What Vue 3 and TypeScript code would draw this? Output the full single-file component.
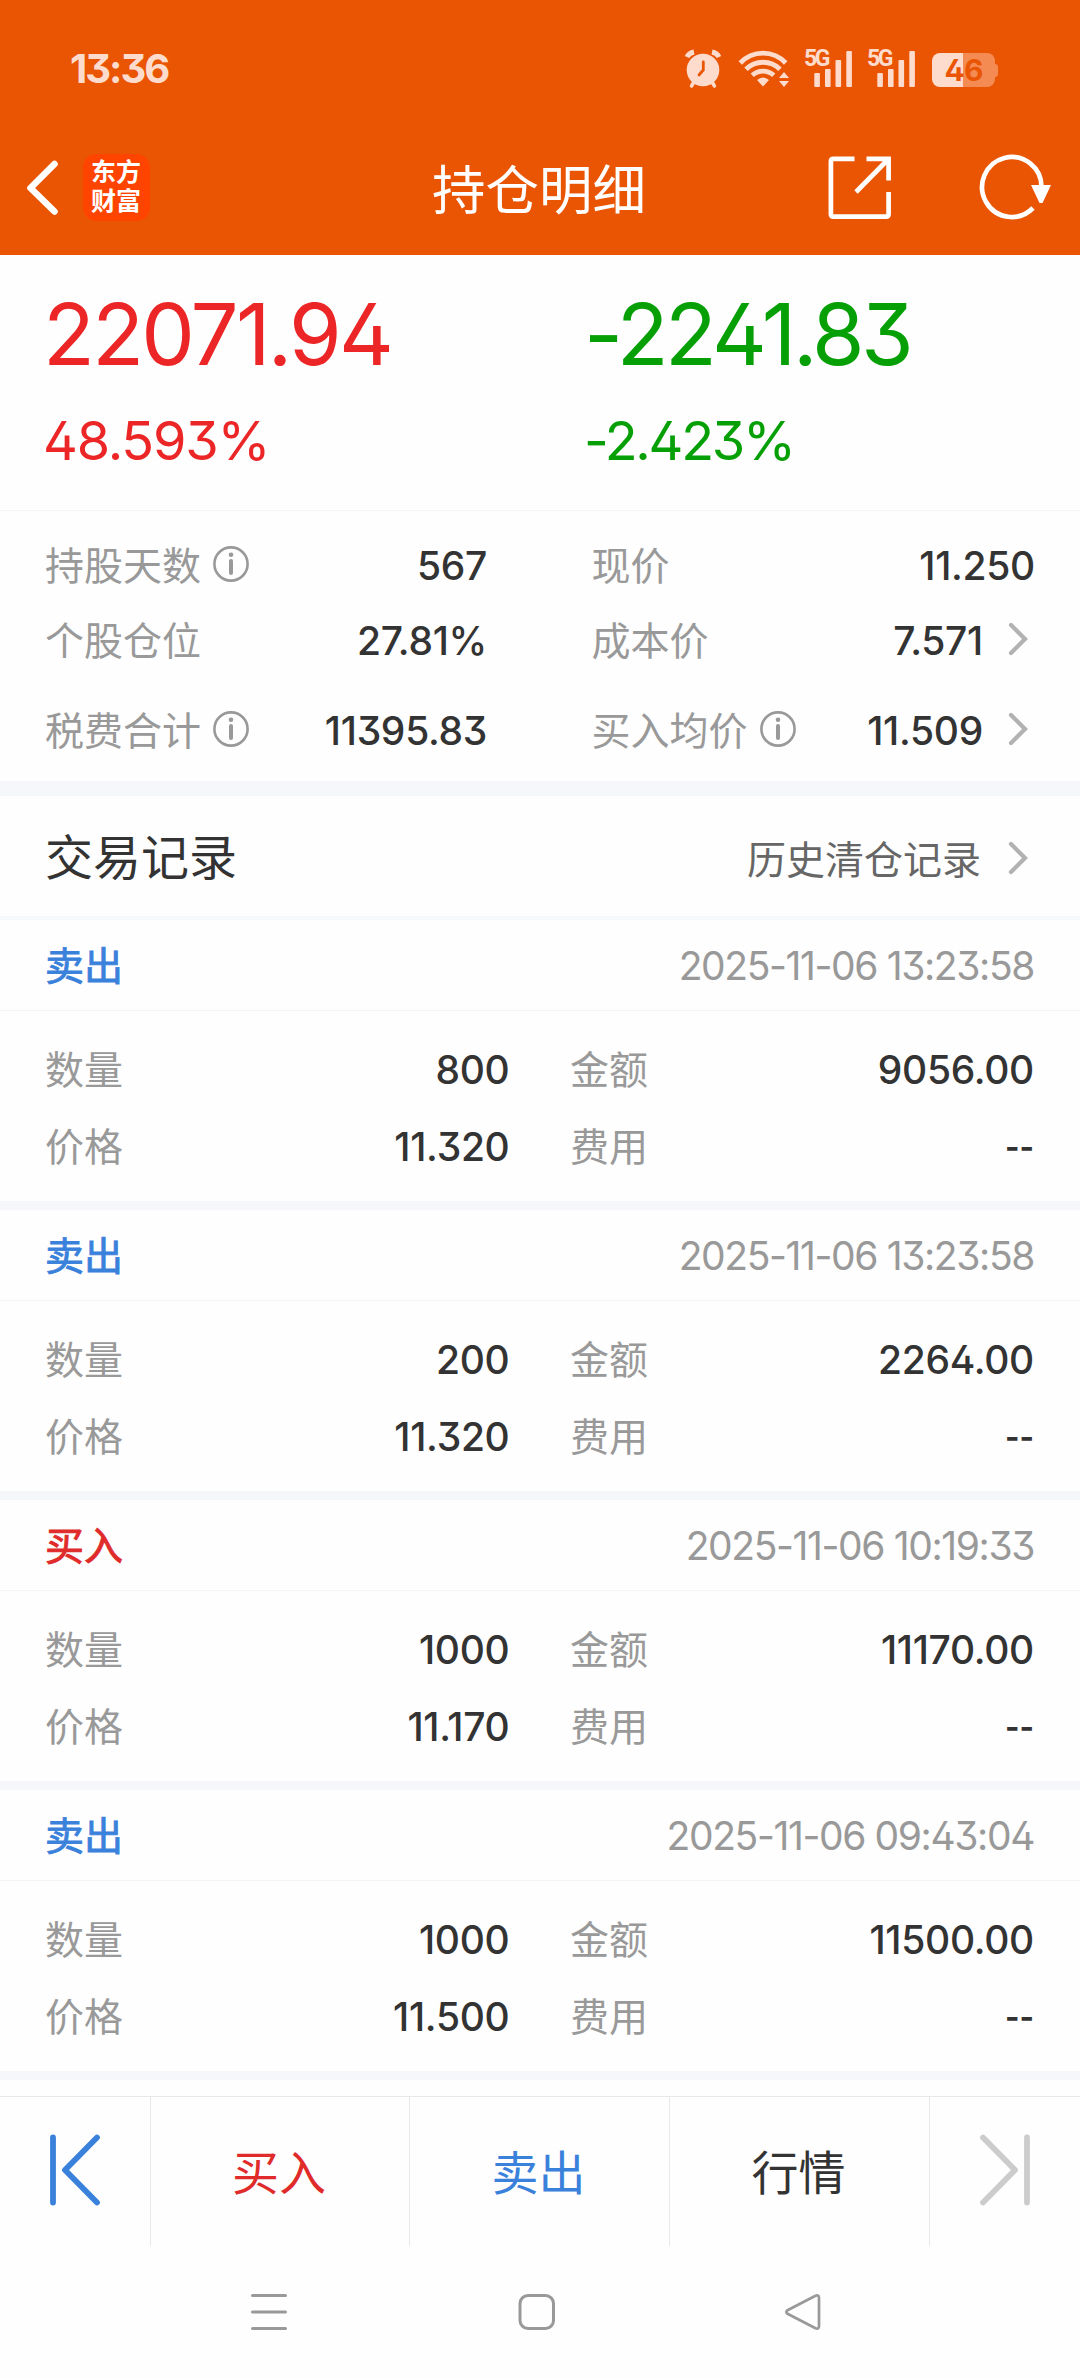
<script setup lang="ts">
interface TradeRecord {
  side: 'buy' | 'sell'
  time: string
  quantity: string
  amount: string
  price: string
  fee: string
}

interface Stat {
  label: string
  value: string
  info?: boolean
  link?: boolean
}

const statRows: [Stat, Stat][] = [
  [{ label: '持股天数', value: '567', info: true }, { label: '现价', value: '11.250' }],
  [{ label: '个股仓位', value: '27.81%' }, { label: '成本价', value: '7.571', link: true }],
  [{ label: '税费合计', value: '11395.83', info: true }, { label: '买入均价', value: '11.509', info: true, link: true }],
]

const records: TradeRecord[] = [
  { side: 'sell', time: '2025-11-06 13:23:58', quantity: '800', amount: '9056.00', price: '11.320', fee: '--' },
  { side: 'sell', time: '2025-11-06 13:23:58', quantity: '200', amount: '2264.00', price: '11.320', fee: '--' },
  { side: 'buy', time: '2025-11-06 10:19:33', quantity: '1000', amount: '11170.00', price: '11.170', fee: '--' },
  { side: 'sell', time: '2025-11-06 09:43:04', quantity: '1000', amount: '11500.00', price: '11.500', fee: '--' },
]
</script>

<template>
  <div class="screen">
    <header class="top">
      <div class="status">
        <span class="clock">13:36</span>
        <div class="status-icons">
          <svg class="alarm" width="38" height="40" viewBox="0 0 38 40">
            <g fill="none" stroke="#fddccd" stroke-linecap="round">
              <path d="M3 8 Q5 4 10 3M28 3 Q33 4 35 8" stroke-width="5" stroke-linecap="butt" />
              <path d="M10 33 L7.500 37M28 33 L30.500 37" stroke-width="3.500" />
            </g>
            <circle cx="19" cy="21" r="16.300" fill="#fddccd" />
            <path d="M19.300 13 V21 L15 26" fill="none" stroke="#ea5504" stroke-width="2.800" stroke-linecap="round" />
          </svg>
          <svg class="wifi" width="51" height="40" viewBox="0 0 51 40">
            <g fill="none" stroke="#fddccd" stroke-width="4.800">
              <path d="M2.300 14 A31 31 0 0 1 47.700 14" />
              <path d="M8 20.300 A24 24 0 0 1 42 20.300" />
              <path d="M14.200 26.300 A16 16 0 0 1 35.800 26.300" />
            </g>
            <path d="M19 31 Q25 26 31 31 L25 37.500 Z" fill="#fddccd" />
            <path d="M46 23 L51 29 H41 Z M46 38 L51 32 H41 Z" fill="#fddccd" />
          </svg>
          <div v-for="sim in 2" :key="sim" class="signal">
            <span class="net">5G</span>
            <svg width="50" height="40" viewBox="0 0 50 40" fill="#fddccd">
              <rect x="10.300" y="24" width="5.600" height="14" rx="1" />
              <rect x="21" y="20" width="5.600" height="18" rx="1" />
              <rect x="31.500" y="11" width="5.600" height="27" rx="1" />
              <rect x="42.300" y="2" width="5.600" height="36" rx="1" />
            </svg>
          </div>
          <div class="battery">
            <div class="cell">46</div>
            <i class="nub"></i>
          </div>
        </div>
      </div>
      <nav class="titlebar">
        <div class="left">
          <svg width="40" height="64" viewBox="0 0 40 64">
            <path d="M34.500 8 L10.500 32 L34.500 55.500" fill="none" stroke="#fff" stroke-width="6.600" stroke-linecap="round" stroke-linejoin="round" />
          </svg>
          <div class="logo"><span>东方</span><span>财富</span></div>
        </div>
        <h1>持仓明细</h1>
        <div class="right">
          <svg width="64" height="64" viewBox="0 0 64 64" fill="none" stroke="#fff" stroke-width="4.700">
            <path d="M26.500 2.900 H5.500 Q2.900 2.900 2.900 5.500 V58 Q2.900 60.600 5.500 60.600 H58 Q60.600 60.600 60.600 58 V36" />
            <path d="M38.500 2.900 H60.600 V24.500M60 3.500 L28 36" />
          </svg>
          <svg width="74" height="68" viewBox="0 0 74 68">
            <path d="M63.500 33.500 A29.700 30 0 1 0 55 54" fill="none" stroke="#fff" stroke-width="4.700" />
            <path d="M53 31 H73 L64.500 49 H61.500 Z" fill="#fff" />
          </svg>
        </div>
      </nav>
    </header>

    <section class="summary">
      <div class="figure up"><b>22071.94</b><span>48.593%</span></div>
      <div class="figure down"><b>-2241.83</b><span>-2.423%</span></div>
    </section>

    <section class="stats">
      <div v-for="(row, r) in statRows" :key="r" class="stat-row">
        <div v-for="s in row" :key="s.label" class="stat">
          <span class="label">{{ s.label }}</span>
          <svg v-if="s.info" class="info" width="38" height="38" viewBox="0 0 38 38">
            <circle cx="19" cy="19" r="16.600" fill="none" stroke="#999" stroke-width="2.600" />
            <circle cx="19" cy="9.700" r="2.300" fill="#999" />
            <path d="M19 16 V28" stroke="#999" stroke-width="4" stroke-linecap="round" />
          </svg>
          <span class="value">{{ s.value }}</span>
          <svg v-if="s.link" class="go" width="22" height="36" viewBox="0 0 22 36">
            <path d="M3 4 L17 18 L3 32" fill="none" stroke="#b2b2b2" stroke-width="4.200" stroke-linecap="round" />
          </svg>
        </div>
      </div>
    </section>

    <section class="records-head">
      <h2>交易记录</h2>
      <span class="history">历史清仓记录</span>
      <svg class="go" width="22" height="36" viewBox="0 0 22 36">
        <path d="M3 4 L17 18 L3 32" fill="none" stroke="#b2b2b2" stroke-width="4.200" stroke-linecap="round" />
      </svg>
    </section>

    <article v-for="(t, i) in records" :key="i" class="record">
      <div class="record-top">
        <span class="side" :class="t.side">{{ t.side === 'buy' ? '买入' : '卖出' }}</span>
        <time>{{ t.time }}</time>
      </div>
      <div class="record-body">
        <div class="pair"><span class="label">数量</span><span class="value">{{ t.quantity }}</span></div>
        <div class="pair"><span class="label">金额</span><span class="value">{{ t.amount }}</span></div>
        <div class="pair"><span class="label">价格</span><span class="value">{{ t.price }}</span></div>
        <div class="pair"><span class="label">费用</span><span class="value dash">{{ t.fee }}</span></div>
      </div>
    </article>

    <footer class="actions">
      <div class="step">
        <svg width="54" height="76" viewBox="0 0 54 76" fill="none" stroke="#3a81db" stroke-width="5.800" stroke-linecap="round" stroke-linejoin="round">
          <path d="M5 5.500 V70.500M49 5.500 L17 38 L49 70.500" />
        </svg>
      </div>
      <div class="action buy">买入</div>
      <div class="action sell">卖出</div>
      <div class="action">行情</div>
      <div class="step">
        <svg width="54" height="76" viewBox="0 0 54 76" fill="none" stroke="#ccc" stroke-width="5.800" stroke-linecap="round" stroke-linejoin="round">
          <path d="M49 5.500 V70.500M5 5.500 L37 38 L5 70.500" />
        </svg>
      </div>
    </footer>

    <div class="sysnav">
      <svg width="40" height="40" viewBox="0 0 40 40" fill="none" stroke="#999" stroke-width="3" stroke-linecap="round">
        <path d="M3.500 3.500 H36.500M3.500 20 H36.500M3.500 36.500 H36.500" />
      </svg>
      <svg width="40" height="40" viewBox="0 0 40 40" fill="none" stroke="#999" stroke-width="3">
        <rect x="4" y="3.500" width="33.500" height="33" rx="8" />
      </svg>
      <svg width="40" height="40" viewBox="0 0 40 40" fill="none" stroke="#999" stroke-width="2.700" stroke-linejoin="round">
        <path d="M4.500 18.200 L32.500 3.800 Q36 2.500 36 6 V34 Q36 37.500 32.500 36.200 L4.500 21.800 Q2 20 4.500 18.200 Z" />
      </svg>
    </div>
  </div>
</template>

<style>
body {
  margin: 0;
  background: #fefefe;
}
</style>

<style scoped>
.screen {
  width: 1080px;
  height: 2378px;
  overflow: hidden;
  display: flex;
  flex-direction: column;
  background: #fefefe;
  color: #333;
  font-family: Inter, "Noto Sans CJK SC", sans-serif;
  font-feature-settings: "cv02", "cv09";
  font-size: 39px;
  line-height: 1;
}
.screen > * {
  flex: none;
  box-sizing: border-box;
}
svg {
  display: block;
  flex: none;
}
.top {
  height: 255px;
  background: #ea5504;
  color: #fff;
}
.status {
  height: 120px;
  box-sizing: border-box;
  padding: 49px 82px 0 70px;
  display: flex;
  justify-content: space-between;
}
.clock {
  font-size: 40px;
  line-height: 40px;
  font-weight: 650;
  color: #fddccd;
  letter-spacing: -2px;
}
.status-icons {
  display: flex;
}
.wifi {
  margin: 0 2px 0 16px;
}
.signal {
  display: flex;
  position: relative;
  margin-left: 13px;
}
.net {
  position: absolute;
  left: 0;
  top: 0;
  font: 700 23px/19px Roboto, sans-serif;
  letter-spacing: -2.500px;
  color: #fddccd;
}
.battery {
  display: flex;
  align-items: center;
  height: 34px;
  margin: 4px 0 0 15px;
}
.cell {
  width: 63px;
  height: 34px;
  border-radius: 8px;
  background: linear-gradient(90deg, #fddccd 31px, #f48b53 31px);
  text-align: center;
  font-size: 30px;
  line-height: 35px;
  font-weight: 700;
  letter-spacing: -1px;
  color: #ea5504;
}
.nub {
  width: 3px;
  height: 13px;
  border-radius: 0 3px 3px 0;
  background: #f48b53;
}
.titlebar {
  height: 135px;
  display: grid;
  grid-template-columns: 1fr auto 1fr;
  align-items: center;
}
.left {
  display: flex;
  align-items: center;
  padding-left: 20px;
}
.logo {
  width: 67px;
  height: 67px;
  box-sizing: border-box;
  padding: 4px 1px 0 0;
  margin: -1px 0 0 23px;
  border-radius: 14px;
  background: #ff4400;
  display: flex;
  flex-direction: column;
  align-items: center;
  font-weight: 700;
  font-size: 25px;
  line-height: 29px;
}
h1 {
  margin: 7px 2px 0 0;
  font-size: 53.500px;
  line-height: 60px;
  font-weight: 400;
}
.right {
  display: flex;
  align-items: center;
  justify-content: flex-end;
  gap: 86px;
  padding-right: 28px;
}
.summary {
  height: 256px;
  padding: 0 43px;
  display: grid;
  grid-template-columns: 541px 1fr;
  border-bottom: 1px solid #f4f4f4;
}
.figure {
  display: flex;
  flex-direction: column;
}
.figure b {
  margin-top: 35px;
  font-weight: 400;
  font-size: 85px;
  line-height: 90px;
  letter-spacing: -2.700px;
}
.figure span {
  margin-top: 31px;
  font-size: 54px;
  line-height: 60px;
  letter-spacing: -1.200px;
}
.down b {
  letter-spacing: -3.500px;
}
.down span {
  letter-spacing: -2.300px;
}
.up {
  color: #ec2626;
}
.down {
  color: #06a006;
}
.stats {
  height: 285px;
  padding: 17px 45px 0;
  border-bottom: 15px solid #f5f7fa;
}
.stat-row {
  display: grid;
  grid-template-columns: 442px 443.500px;
  justify-content: space-between;
  height: 75px;
}
.stat-row:last-child {
  margin-top: 15px;
}
.stat {
  display: flex;
  align-items: center;
}
.info {
  margin: -4px 0 0 11px;
}
.value {
  margin-left: auto;
  font-weight: 500;
  letter-spacing: -0.300px;
}
.dash {
  font-size: 31px;
  font-weight: 700;
  letter-spacing: 0;
}
.go {
  margin: -3px 5px 0 25px;
}
.label {
  color: #999;
}
.records-head {
  height: 124px;
  padding: 3px 45px 0;
  display: flex;
  align-items: center;
  border-bottom: 4px solid #f7f8f9;
}
.records-head .go {
  margin: 0 5px 0 27px;
}
h2 {
  margin: 0 auto 0 0;
  font-size: 48px;
  line-height: 60px;
  font-weight: 400;
}
.history {
  margin-top: 4px;
  color: #666;
}
.record {
  height: 290px;
  border-bottom: 9px solid #f5f7fa;
}
.record-top {
  height: 91px;
  box-sizing: border-box;
  padding: 1px 46px 0 45px;
  display: flex;
  align-items: center;
  justify-content: space-between;
  border-bottom: 1px solid #f4f4f4;
}
.side {
  -webkit-text-stroke: 0.900px currentColor;
}
.sell {
  color: #3a81db;
}
.buy {
  color: #e02b2b;
}
time {
  color: #999;
  letter-spacing: -1.380px;
}
.record-body {
  padding: 20px 46px 0 45px;
  display: grid;
  grid-template-columns: 464.500px 464px;
  grid-auto-rows: 77px;
  justify-content: space-between;
}
.pair {
  display: flex;
  align-items: center;
}
.actions {
  margin-top: 16px;
  height: 150px;
  border-top: 1px solid #e8e8e8;
  display: grid;
  grid-template-columns: 151px 259px 260px 260px 150px;
}
.actions > * {
  display: flex;
  align-items: center;
  justify-content: center;
  box-sizing: border-box;
  border-right: 1px solid #e8e8e8;
}
.actions > :last-child {
  border-right: 0;
}
.step {
  padding-bottom: 3px;
}
.step:first-child {
  padding-right: 1px;
}
.action {
  padding: 2px 2px 0 0;
  font-size: 47px;
}
.sysnav {
  height: 132px;
  padding: 0 257px 0 249px;
  display: flex;
  align-items: center;
  justify-content: space-between;
}
</style>
